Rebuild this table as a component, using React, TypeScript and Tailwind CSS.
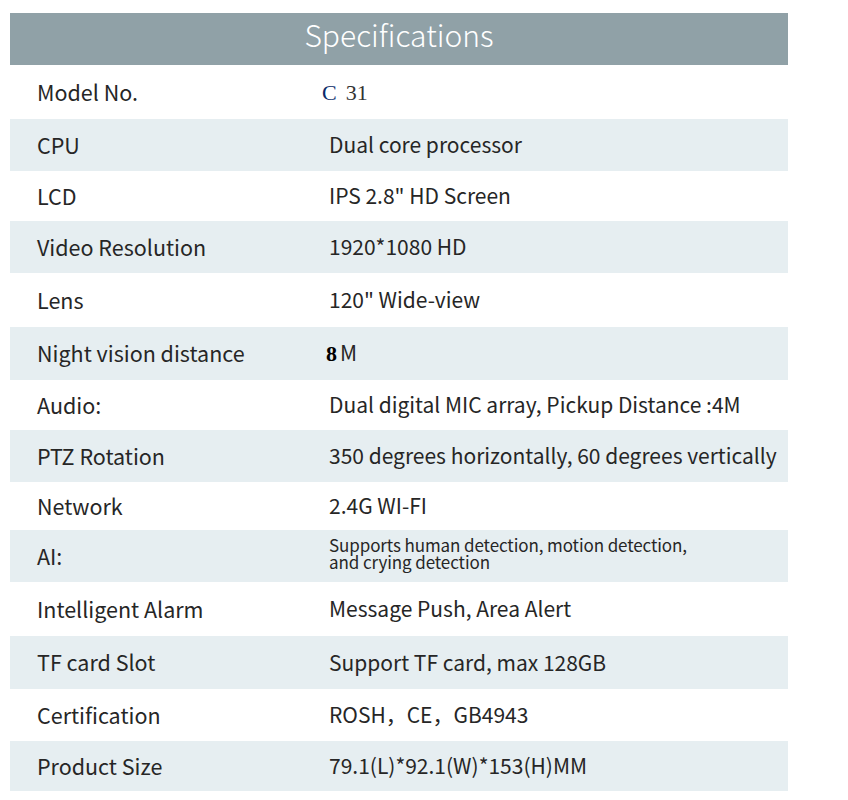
import React from "react";

type Spec = {
  label: string;
  value: React.ReactNode;
  h: string;
  shaded?: boolean;
};

const specs: Spec[] = [
  {
    label: "Model No.",
    h: "h-[54px]",
    value: (
      <span className="-ml-[7px] font-['Liberation_Serif',serif] text-[22px] text-[#333]">
        <span className="text-[#0b2a6b]">C</span>
        <span className="ml-[9px]">31</span>
      </span>
    ),
  },
  { label: "CPU", h: "h-[52px]", shaded: true, value: "Dual core processor" },
  { label: "LCD", h: "h-[50px]", value: 'IPS 2.8" HD Screen' },
  { label: "Video Resolution", h: "h-[52px]", shaded: true, value: "1920*1080 HD" },
  { label: "Lens", h: "h-[54px]", value: '120" Wide-view' },
  {
    label: "Night vision distance",
    h: "h-[53px]",
    shaded: true,
    value: (
      <span className="-ml-[3px]">
        <span className="font-['Liberation_Serif',serif] font-bold text-[22px] text-black">8</span>
        <span className="ml-[3px]">M</span>
      </span>
    ),
  },
  { label: "Audio:", h: "h-[50px]", value: "Dual digital MIC array, Pickup Distance :4M" },
  {
    label: "PTZ Rotation",
    h: "h-[52px]",
    shaded: true,
    value: "350 degrees horizontally, 60 degrees vertically",
  },
  { label: "Network", h: "h-[48px]", value: "2.4G WI-FI" },
  {
    label: "AI:",
    h: "h-[52px]",
    shaded: true,
    value: (
      <span className="block -mt-[6px] text-[17px] leading-[17px] tracking-[-0.1px]">
        Supports human detection, motion detection,
        <br />
        and crying detection
      </span>
    ),
  },
  { label: "Intelligent Alarm", h: "h-[54px]", value: "Message Push, Area Alert" },
  { label: "TF card Slot", h: "h-[53px]", shaded: true, value: "Support TF card, max 128GB" },
  { label: "Certification", h: "h-[52px]", value: "ROSH，CE，GB4943" },
  { label: "Product Size", h: "h-[50px]", shaded: true, value: "79.1(L)*92.1(W)*153(H)MM" },
];

export default function App() {
  return (
    <div className="w-[848px] h-[800px] bg-white pt-[13px] font-['Noto_Sans_CJK_SC','Noto_Sans',sans-serif] text-[#262626]">
      <div className="w-[778px] ml-[10px]">
        <div className="h-[52px] bg-[#90a1a7] flex items-center justify-center pb-[10px]">
          <h1 className="text-white text-[30px] font-light leading-none">Specifications</h1>
        </div>
        {specs.map((s) => (
          <div
            key={s.label}
            className={`${s.h} grid grid-cols-[319px_1fr] items-center text-[21px] ${
              s.shaded ? "bg-[#e6eef1]" : "bg-white"
            }`}
          >
            <div className="pl-[27px] text-[21.5px]">{s.label}</div>
            <div>{s.value}</div>
          </div>
        ))}
      </div>
    </div>
  );
}
